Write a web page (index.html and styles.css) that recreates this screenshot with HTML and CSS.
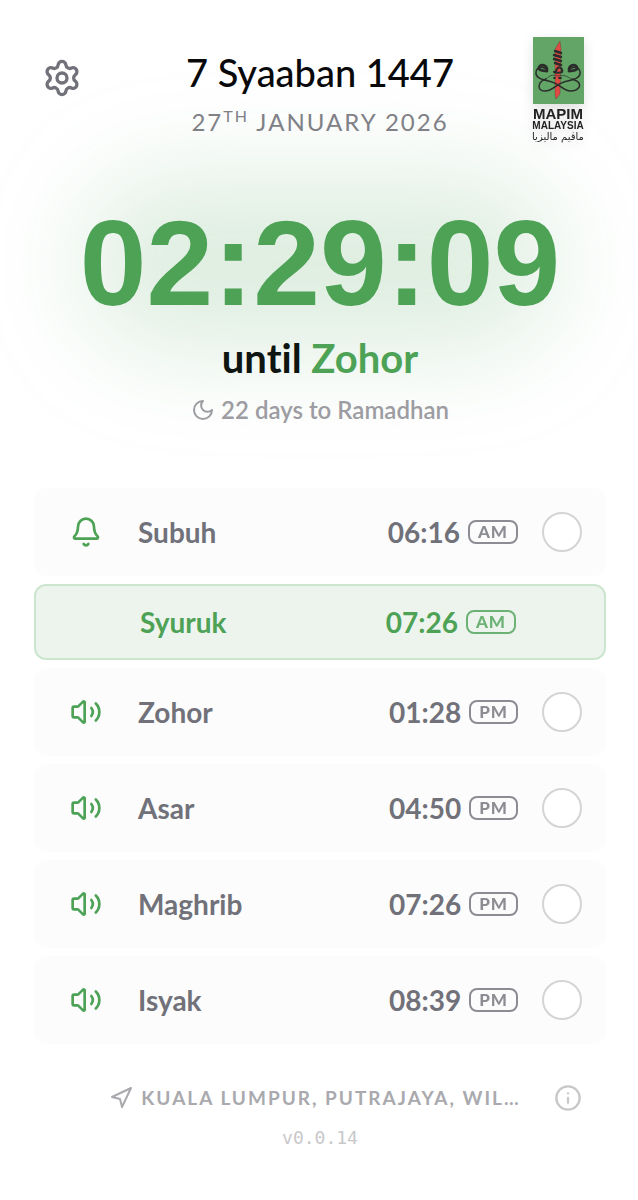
FILE: index.html
```html
<!DOCTYPE html>
<html lang="ms">
<head>
  <meta charset="UTF-8" />
  <meta name="viewport" content="width=device-width, initial-scale=1" />
  <title>Waktu Solat</title>
  <link rel="stylesheet" href="styles.css">
</head>
<body>

  <!-- icons used more than once -->
  <svg class="sprite" aria-hidden="true">
    <symbol id="icon-sound" viewBox="0 0 24 24">
      <path d="M11 4.702a.705.705 0 0 0-1.203-.498L6.413 7.587A1.4 1.4 0 0 1 5.416 8H3a1 1 0 0 0-1 1v6a1 1 0 0 0 1 1h2.416a1.4 1.4 0 0 1 .997.413l3.383 3.384A.705.705 0 0 0 11 19.298z"/>
      <path d="M16 9a5 5 0 0 1 0 6"/>
      <path d="M19.364 18.364a9 9 0 0 0 0-12.728"/>
    </symbol>
  </svg>

  <div class="app">
    <header class="top-bar">
      <button class="icon-btn settings-btn" aria-label="Settings">
        <svg class="icon" viewBox="0 0 24 24">
          <path d="M9.671 4.136a2.34 2.34 0 0 1 4.659 0 2.34 2.34 0 0 0 3.319 1.915 2.34 2.34 0 0 1 2.33 4.033 2.34 2.34 0 0 0 0 3.831 2.34 2.34 0 0 1-2.33 4.033 2.34 2.34 0 0 0-3.319 1.915 2.34 2.34 0 0 1-4.659 0 2.34 2.34 0 0 0-3.32-1.915 2.34 2.34 0 0 1-2.33-4.033 2.34 2.34 0 0 0 0-3.831A2.34 2.34 0 0 1 6.35 6.051a2.34 2.34 0 0 0 3.319-1.915"/>
          <circle cx="12" cy="12" r="3"/>
        </svg>
      </button>

      <div class="dates">
        <h1>7 Syaaban 1447</h1>
        <p>27<sup>TH</sup> JANUARY 2026</p>
      </div>

      <svg class="logo" viewBox="0 0 56 110" role="img" aria-label="MAPIM Malaysia">
        <rect x="3" y="1" width="51" height="67" fill="#62a566"/>
        <!-- dagger -->
        <path d="M30 5l1 8-1 45-4 5-1-4V13z" fill="#e04a45" stroke="#51422f" stroke-width=".4"/>
        <g fill="none" stroke="#2b2d2b" stroke-linecap="round">
          <path d="M25 15l6 2M24 19l7 2M24 23l7 2M25 27l6 2" stroke-width="2.4"/>
          <path d="M24 36c2 1 7 1 8 0 1-4-3-6-5-3l-1 2" stroke-width="2.2"/>
          <path d="M17 35c-4 0-8-1-8-3 0-4 7-4 8 1M39 35c4 0 8-1 8-3 0-4-7-4-8 1" stroke-width="2.8"/>
          <path d="M17 34C14 30 7 30 6 36c-1 7 9 8 16 10 8 2 11 9 19 9 6 0 10-4 8-8-2-3-5-3-7-4" stroke-width="1.5"/>
          <path d="M39 34c3-4 10-4 11 2 1 7-9 8-16 10-8 2-11 9-19 9-6 0-7-4-5-8 2-3 4-3 6-4" stroke-width="1.5"/>
          <path d="M16 43c5-5 8-4 12-3 4-1 8-1 13 3" stroke-width=".7"/>
          <path d="M24 42h1M29 42h2" stroke-width="1.8"/>
        </g>
        <text x="28" y="83" font-size="15" font-weight="700" text-anchor="middle">MAPIM</text>
        <text x="28" y="93" font-size="10" font-weight="700" text-anchor="middle">MALAYSIA</text>
        <text class="logo-jawi" x="28" y="104" font-size="10" text-anchor="middle">ماڤيم ماليزيا</text>
      </svg>
    </header>

    <main>
      <section class="countdown">
        <div class="clock">02:29:09</div>
        <h2>until <span>Zohor</span></h2>
        <p class="ramadhan">
          <svg class="icon" viewBox="0 0 24 24"><path d="M12 3a6 6 0 0 0 9 9 9 9 0 1 1-9-9Z"/></svg>
          22 days to Ramadhan
        </p>
      </section>

      <ul class="prayers">
        <li class="prayer">
          <button class="icon-btn" aria-label="Subuh alert">
            <svg class="icon" viewBox="0 0 24 24">
              <path d="M10.268 21a2 2 0 0 0 3.464 0"/>
              <path d="M3.262 15.326A1 1 0 0 0 4 17h16a1 1 0 0 0 .74-1.673C19.41 13.956 18 12.499 18 8A6 6 0 0 0 6 8c0 4.499-1.411 5.956-2.738 7.326"/>
            </svg>
          </button>
          <label class="name" for="subuh">Subuh</label>
          <span class="time">06:16 <span class="period">AM</span></span>
          <input class="check" type="checkbox" id="subuh">
        </li>
        <li class="prayer active">
          <span></span>
          <span class="name">Syuruk</span>
          <span class="time">07:26 <span class="period">AM</span></span>
        </li>
        <li class="prayer">
          <button class="icon-btn" aria-label="Zohor alert"><svg class="icon"><use href="#icon-sound"/></svg></button>
          <label class="name" for="zohor">Zohor</label>
          <span class="time">01:28 <span class="period">PM</span></span>
          <input class="check" type="checkbox" id="zohor">
        </li>
        <li class="prayer">
          <button class="icon-btn" aria-label="Asar alert"><svg class="icon"><use href="#icon-sound"/></svg></button>
          <label class="name" for="asar">Asar</label>
          <span class="time">04:50 <span class="period">PM</span></span>
          <input class="check" type="checkbox" id="asar">
        </li>
        <li class="prayer">
          <button class="icon-btn" aria-label="Maghrib alert"><svg class="icon"><use href="#icon-sound"/></svg></button>
          <label class="name" for="maghrib">Maghrib</label>
          <span class="time">07:26 <span class="period">PM</span></span>
          <input class="check" type="checkbox" id="maghrib">
        </li>
        <li class="prayer">
          <button class="icon-btn" aria-label="Isyak alert"><svg class="icon"><use href="#icon-sound"/></svg></button>
          <label class="name" for="isyak">Isyak</label>
          <span class="time">08:39 <span class="period">PM</span></span>
          <input class="check" type="checkbox" id="isyak">
        </li>
      </ul>
    </main>

    <footer>
      <div class="zone-row">
        <button class="zone-btn">
          <svg class="icon" viewBox="0 0 24 24"><path d="M3 11L22 2l-9 19-2-8z"/></svg>
          <span>KUALA LUMPUR, PUTRAJAYA, WIL…</span>
        </button>
        <button class="icon-btn info-btn" aria-label="Info">
          <svg class="icon" viewBox="0 0 24 24">
            <circle cx="12" cy="12" r="10"/>
            <path d="M12 16v-4M12 8h.01"/>
          </svg>
        </button>
      </div>
      <p class="version">v0.0.14</p>
    </footer>
  </div>

</body>
</html>
```

FILE: styles.css
```css
* {
  box-sizing: border-box;
}
body {
  margin: 0;
  font-family: Lato, "Open Sans", sans-serif;
  font-variant-ligatures: none;
  background-color: #fff;
  color: #71717a;
  min-height: 100vh;
}
h1, h2, p, ul {
  margin: 0;
  padding: 0;
}
button {
  font: inherit;
  color: inherit;
  background: none;
  border: none;
  padding: 0;
  cursor: pointer;
}

.sprite {
  display: none;
}
.icon {
  display: block;
  width: 32px;
  height: 32px;
  fill: none;
  stroke: currentColor;
  stroke-width: 2;
  stroke-linecap: round;
  stroke-linejoin: round;
  flex-shrink: 0;
}
.icon-btn {
  display: flex;
  align-items: center;
  justify-content: center;
  width: 56px;
  height: 56px;
}

.app {
  padding: 36px 32px 48px 34px;
}

/* header */
.top-bar {
  display: grid;
  grid-template-columns: 76px 1fr 76px;
  align-items: start;
  position: relative;
  z-index: 1;
}
.settings-btn {
  margin-top: 14px;
}
.settings-btn .icon {
  width: 40px;
  height: 40px;
}
.dates {
  text-align: center;
  padding-top: 12px;
}
.dates h1 {
  font-size: 38px;
  line-height: 48px;
  font-weight: 500;
  color: #09090b;
}
.dates p {
  margin-top: 8px;
  font-size: 24px;
  line-height: 36px;
  letter-spacing: 2px;
  color: #808087;
}
.dates sup {
  font-size: 16px;
  line-height: 0;
}
.logo {
  width: 56px;
  height: 110px;
  filter: drop-shadow(0 4px 6px rgba(0, 0, 0, 0.12));
}
.logo text {
  font-family: "Liberation Sans", sans-serif;
  fill: #222;
}
.logo .logo-jawi {
  font-family: "DejaVu Sans", sans-serif;
}

/* countdown */
.countdown {
  position: relative;
  text-align: center;
  margin-top: 48px;
}
/* soft green glow behind the clock */
.countdown::before {
  content: "";
  position: absolute;
  z-index: -1;
  top: -20px;
  left: 8%;
  right: 8%;
  height: 180px;
  border-radius: 90px;
  background-color: rgba(77, 162, 86, 0.18);
  filter: blur(50px);
}
.clock {
  font-family: "Liberation Sans", Arial, sans-serif;
  font-size: 120px;
  line-height: 138px;
  font-weight: 700;
  color: #4da256;
}
.countdown h2 {
  font-size: 40px;
  line-height: 52px;
  font-weight: 700;
  color: #0f1511;
}
.countdown h2 span {
  color: #4da256;
}
.ramadhan {
  display: flex;
  align-items: center;
  justify-content: center;
  gap: 6px;
  margin-top: 8px;
  font-size: 24px;
  line-height: 36px;
  font-weight: 600;
  color: #9c9ca2;
}
.ramadhan .icon {
  width: 24px;
  height: 24px;
}

/* prayer times */
.prayers {
  display: flex;
  flex-direction: column;
  gap: 8px;
  margin-top: 60px;
  list-style: none;
}
.prayer {
  display: grid;
  grid-template-columns: 56px 1fr auto 40px;
  column-gap: 24px;
  align-items: center;
  padding: 16px 24px;
  border-radius: 12px;
  background-color: #fcfcfc;
  font-size: 28px;
  line-height: 40px;
  font-weight: 700;
}
.prayer.active {
  border: 2px solid #cce5cf;
  background-color: #edf4ee;
  color: #4da256;
}
.prayer .icon-btn {
  color: #4da256;
}
.time {
  display: flex;
  align-items: center;
  gap: 8px;
}
.period {
  padding: 0 8px;
  border: 2px solid currentColor;
  border-radius: 8px;
  font-size: 17px;
  line-height: 20px;
  font-weight: 900;
  letter-spacing: 1px;
  opacity: 0.8;
}
.check {
  appearance: none;
  width: 40px;
  height: 40px;
  margin: 0;
  border: 2px solid #d4d4d4;
  border-radius: 50%;
  background-color: #fff;
  cursor: pointer;
}
.check:checked {
  border-color: #4da256;
  background-color: #4da256;
}

/* footer */
footer {
  margin-top: 32px;
  text-align: center;
}
.zone-row {
  display: grid;
  grid-template-columns: 56px 1fr 56px;
  align-items: center;
  padding-right: 10px;
}
.zone-btn {
  grid-column: 2;
  display: flex;
  align-items: center;
  justify-content: center;
  gap: 8px;
  min-width: 0;
  font-size: 19px;
  line-height: 44px;
  font-weight: 700;
  letter-spacing: 2px;
  color: #a9a9ae;
  white-space: nowrap;
}
.zone-btn span {
  overflow: hidden;
  text-overflow: ellipsis;
}
.zone-btn .icon {
  width: 24px;
  height: 24px;
}
.info-btn {
  height: 44px;
  color: #c8c8ca;
}
.info-btn .icon {
  width: 28px;
  height: 28px;
}
.version {
  margin-top: 6px;
  font-family: "DejaVu Sans Mono", monospace;
  font-size: 18px;
  line-height: 24px;
  color: #c8c8ca;
}
```
